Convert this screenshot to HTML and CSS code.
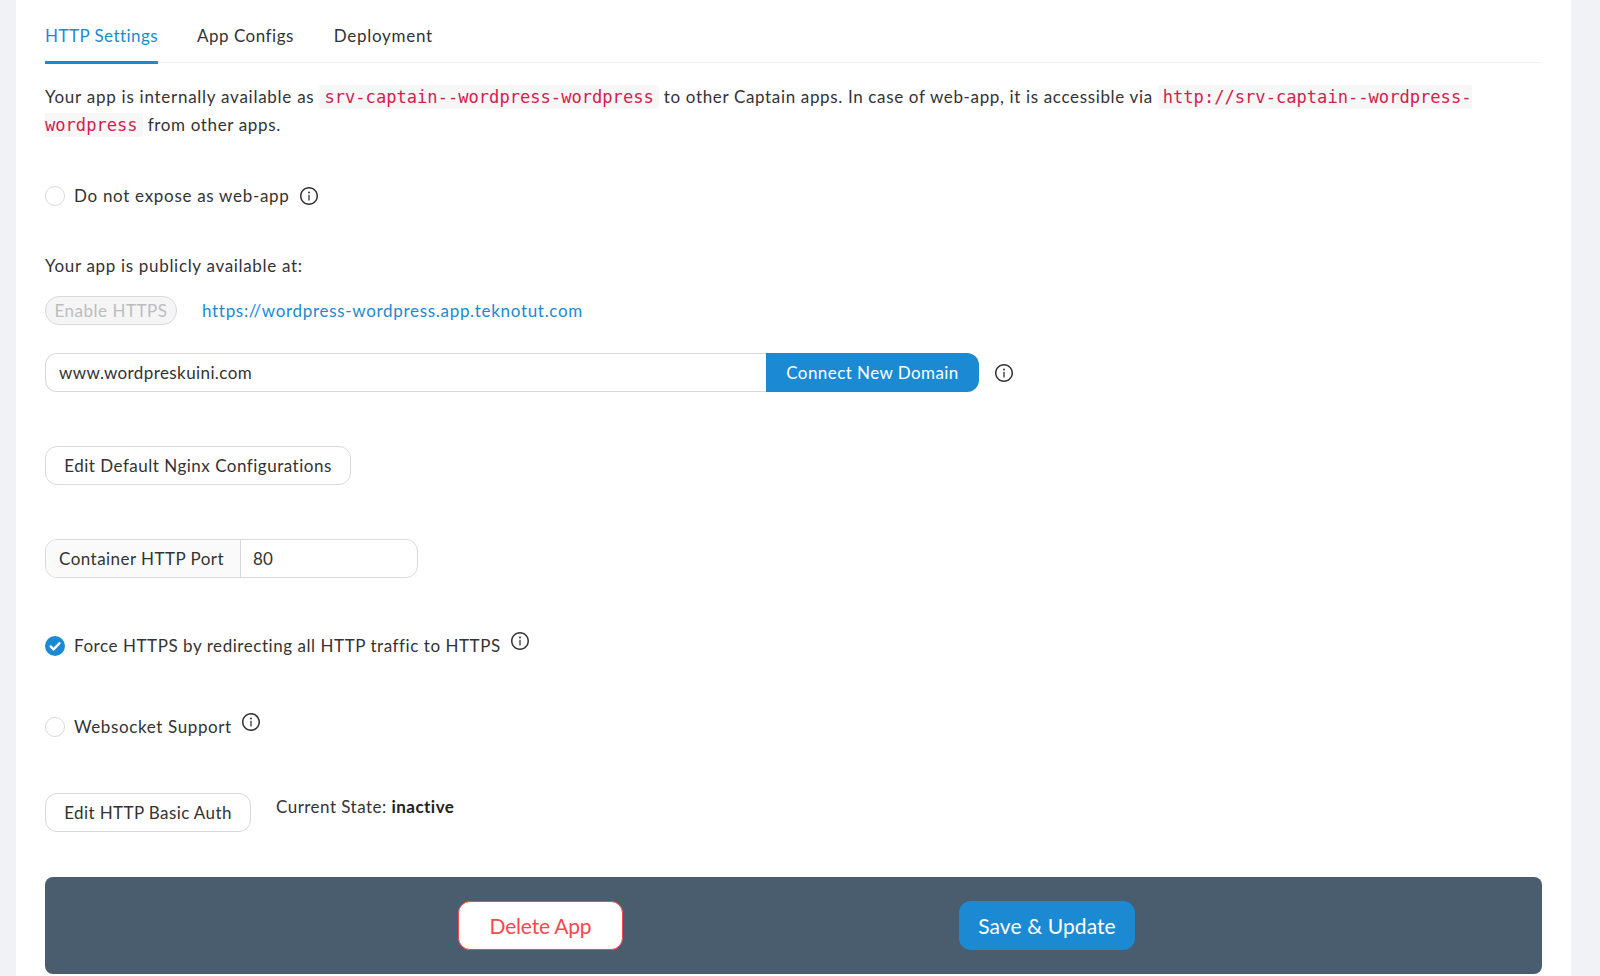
FILE: index.html
```html
<!DOCTYPE html>
<html lang="en">
<head>
<meta charset="utf-8">
<title>HTTP Settings</title>
<link rel="stylesheet" href="styles.css">
</head>
<body>
<svg class="defs" width="0" height="0" aria-hidden="true">
  <symbol id="info" viewBox="64 64 896 896">
    <path d="M512 64C264.6 64 64 264.6 64 512s200.6 448 448 448 448-200.6 448-448S759.4 64 512 64zm0 820c-205.4 0-372-166.6-372-372s166.6-372 372-372 372 166.6 372 372-166.6 372-372 372z"/>
    <path d="M464 336a48 48 0 1 0 96 0 48 48 0 1 0-96 0zm72 112h-48c-4.4 0-8 3.6-8 8v272c0 4.4 3.6 8 8 8h48c4.4 0 8-3.6 8-8V456c0-4.4-3.6-8-8-8z"/>
  </symbol>
</svg>
<main class="panel">
  <nav class="tabs">
    <a class="tab tab-active">HTTP Settings</a>
    <a class="tab">App Configs</a>
    <a class="tab tab-deploy">Deployment</a>
  </nav>

  <p class="intro"><span class="intro-lead">Your app is internally available as</span> <code>srv-captain--wordpress-wordpress</code> to other Captain apps. In case of web-app, it is accessible via <code>http://srv-captain--wordpress-wordpress</code> from other apps.</p>

  <div class="row check-row gap-expose">
    <span class="radio"></span>
    <span class="text-expose">Do not expose as web-app</span>
    <svg class="icon"><use href="#info"/></svg>
  </div>

  <p class="label">Your app is publicly available at:</p>

  <div class="row https-row">
    <button class="btn btn-disabled">Enable HTTPS</button>
    <a class="link">https://wordpress-wordpress.app.teknotut.com</a>
  </div>

  <div class="row domain-row">
    <div class="input-group">
      <div class="input domain-input">www.wordpreskuini.com</div>
      <button class="btn btn-primary btn-connect">Connect New Domain</button>
    </div>
    <svg class="icon icon-domain"><use href="#info"/></svg>
  </div>

  <button class="btn btn-default btn-nginx">Edit Default Nginx Configurations</button>

  <div class="port-group">
    <span class="addon">Container HTTP Port</span>
    <span class="port-value">80</span>
  </div>

  <div class="row check-row gap-force">
    <span class="radio radio-on">
      <svg viewBox="0 0 20 20" width="20" height="20"><path d="M5.6 10.4l3 3 5.8-6.2" fill="none" stroke="#fff" stroke-width="2.4" stroke-linecap="round" stroke-linejoin="round"/></svg>
    </span>
    <span class="text-force">Force HTTPS by redirecting all HTTP traffic to HTTPS</span>
    <svg class="icon icon-raised"><use href="#info"/></svg>
  </div>

  <div class="row check-row gap-socket">
    <span class="radio"></span>
    <span class="text-socket">Websocket Support</span>
    <svg class="icon icon-raised"><use href="#info"/></svg>
  </div>

  <div class="row auth-row">
    <button class="btn btn-default btn-auth">Edit HTTP Basic Auth</button>
    <span class="state">Current State: <b>inactive</b></span>
  </div>

  <div class="action-bar">
    <button class="btn-large btn-delete">Delete App</button>
    <button class="btn-large btn-save">Save &amp; Update</button>
  </div>
</main>
</body>
</html>
```
FILE: styles.css
```css
* { box-sizing: border-box; }
html, body { margin: 0; height: 976px; overflow: hidden; }
body {
  background: #f0f2f5;
  font-family: "Lato", "Noto Sans", sans-serif;
  font-size: 17px;
  line-height: 28px;
  color: #333;
  letter-spacing: 0.2px;
}
.defs { position: absolute; }
.panel {
  margin: 0 29px 0 16px;
  padding: 0 29px;
  height: 976px;
  background: #fff;
}
.tabs {
  display: flex;
  gap: 39px;
  height: 63px;
  margin-right: 1px;
  border-bottom: 1px solid #f0f0f0;
}
.tab {
  position: relative;
  padding-top: 22px;
  color: #333;
  letter-spacing: 0.5px;
}
.tab-active { color: #1b8ad3; letter-spacing: 0.45px; }
.tab-active::after {
  content: "";
  position: absolute;
  left: 0;
  right: 0;
  bottom: -2px;
  height: 3px;
  background: #1b8ad3;
}
.tab-deploy { margin-left: 1px; letter-spacing: 0.7px; }
.intro { margin: 20px 1px 0 0; letter-spacing: 0.65px; }
.intro-lead { letter-spacing: 0.74px; }
code {
  font-family: "DejaVu Sans Mono", monospace;
  font-size: 17.1px;
  letter-spacing: 0;
  color: #d6204e;
  background: #f7f7f7;
  padding: 2px 5px;
  border-radius: 3px;
}
.row { display: flex; align-items: center; }
.check-row { height: 28px; }
.gap-expose { margin-top: 43px; }
.gap-force { margin-top: 54px; }
.gap-socket { margin-top: 53px; }
.text-expose { letter-spacing: 0.7px; }
.text-force { letter-spacing: 0.55px; }
.text-socket { letter-spacing: 0.62px; }
.radio {
  flex: none;
  width: 20px;
  height: 20px;
  margin-right: 9px;
  border: 1px solid #d9d9d9;
  border-radius: 50%;
  background: #fff;
}
.radio-on { border: 0; background: #1b8ad3; }
.radio-on svg { display: block; }
.icon { flex: none; width: 18px; height: 18px; fill: #333; margin-left: 10px; }
.icon-raised { margin-top: -10px; }
.icon-domain { margin-left: 16px; }
.label { margin: 42px 0 0; letter-spacing: 0.68px; }
.https-row { margin-top: 16px; gap: 25px; }
.btn {
  font: inherit;
  letter-spacing: inherit;
  height: 39px;
  padding: 0 19px;
  border-radius: 12px;
  cursor: pointer;
}
.btn-disabled {
  height: 29px;
  width: 132px;
  padding: 0;
  line-height: 24px;
  border-radius: 14px;
  letter-spacing: 0.53px;
  color: #bdbdbd;
  background: #f5f5f5;
  border: 1px solid #d9d9d9;
}
.link { line-height: 22px; color: #1b8ad3; letter-spacing: 0.69px; }
.domain-row { margin-top: 28px; }
.input-group { display: flex; }
.input {
  height: 39px;
  padding: 0 13px;
  line-height: 37px;
  background: #fff;
  border: 1px solid #d9d9d9;
}
.domain-input {
  width: 721px;
  border-right: 0;
  border-radius: 12px 0 0 12px;
  letter-spacing: 0.4px;
}
.btn-primary { border: 0; color: #fff; background: #1b8ad3; }
.btn-connect { width: 213px; padding: 0; border-radius: 0 12px 12px 0; letter-spacing: 0.43px; }
.btn-default {
  display: block;
  color: #333;
  background: #fff;
  border: 1px solid #d9d9d9;
}
.btn-nginx { margin-top: 54px; width: 306px; padding: 0; letter-spacing: 0.5px; }
.port-group {
  display: flex;
  width: 373px;
  height: 39px;
  margin-top: 54px;
  line-height: 37px;
  border: 1px solid #d9d9d9;
  border-radius: 12px;
  overflow: hidden;
}
.addon {
  width: 195px;
  padding-left: 13px;
  background: #fafafa;
  border-right: 1px solid #d9d9d9;
  letter-spacing: 0.46px;
}
.port-value { padding-left: 12px; }
.auth-row { margin-top: 52px; align-items: flex-start; gap: 25px; }
.btn-auth { width: 206px; padding: 0; letter-spacing: 0.4px; }
.state { letter-spacing: 0.47px; }
.state b { font-weight: 700; color: #222; }
.action-bar {
  display: flex;
  align-items: center;
  gap: 336px;
  height: 97px;
  margin-top: 45px;
  padding-left: 413px;
  background: #4a5d6e;
  border-radius: 8px;
}
.btn-large {
  font: inherit;
  font-size: 21px;
  height: 49px;
  border-radius: 12px;
  cursor: pointer;
}
.btn-delete {
  width: 165px;
  letter-spacing: -0.2px;
  color: #f5484f;
  background: #fff;
  border: 1.5px solid #f5484f;
}
.btn-save {
  width: 176px;
  letter-spacing: 0.1px;
  color: #fff;
  background: #1b8ad3;
  border: 0;
}
```
